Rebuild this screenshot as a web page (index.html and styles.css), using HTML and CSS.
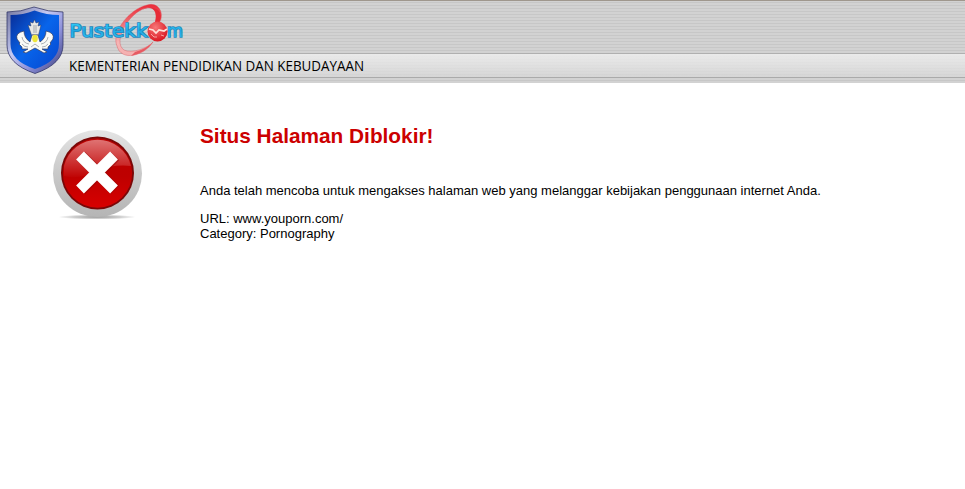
FILE: index.html
```html
<!DOCTYPE html>
<html lang="id">
<head>
<meta charset="utf-8">
<title>Situs Halaman Diblokir!</title>
<link rel="stylesheet" href="styles.css">
</head>
<body>
<header class="banner">
<svg class="brand" width="400" height="83" viewBox="0 0 400 83">
  <defs>
    <linearGradient id="rim" x1="0" y1="0" x2="1" y2="1"><stop offset="0" stop-color="#70739b"/><stop offset=".4" stop-color="#c5c9f2"/><stop offset=".65" stop-color="#8d91da"/><stop offset="1" stop-color="#343675"/></linearGradient>
    <linearGradient id="field" x1="0" y1="0" x2="1" y2="1"><stop offset="0" stop-color="#082b94"/><stop offset=".5" stop-color="#0865eb"/><stop offset="1" stop-color="#0646cf"/></linearGradient>
    <linearGradient id="ring" x1="0" y1="0" x2="0" y2="1"><stop offset="0" stop-color="#ec2a38"/><stop offset=".35" stop-color="#ee6a70"/><stop offset=".75" stop-color="#f5b5b5"/><stop offset="1" stop-color="#f4b0b0"/></linearGradient>
    <linearGradient id="word" x1="0" y1="0" x2="0" y2="1"><stop offset="0" stop-color="#38dcff"/><stop offset=".5" stop-color="#20a9e4"/><stop offset="1" stop-color="#36c4ee"/></linearGradient>
    <radialGradient id="ball" cx=".4" cy=".3" r=".7"><stop offset="0" stop-color="#f77778"/><stop offset="1" stop-color="#db1822"/></radialGradient>
  </defs>
  <path d="M7 12Q21 12 34 7Q48 12 63 12V45Q63 64 35 73.500Q7 64 7 45Z" fill="url(#rim)" stroke="#34376b" stroke-width=".8"/>
  <path d="M10.500 15Q23 15 34.500 10.500Q47 15 59 15V44Q59 61 35 69Q10.500 61 10.500 44Z" fill="url(#field)"/>
  <path d="M31.500 35L28 25L31 26L30 22L33 23L34.500 19.500L36 23L39 22L38 26L41 25L38.500 35Z" fill="#e7e8e5" stroke="#293863" stroke-width=".5"/>
  <path d="M30 42Q24 38 24 31Q15 33 17 39L20 43L19 44L22 47L22 49L28 49L23 52L26 53L35 48L44 53L47 52L42 49L48 49L48 47L51 44L50 43L53 39Q55 33 46 31Q46 38 40 42L38 35H32Z" fill="#fafaf7" stroke="#343d62" stroke-width=".7"/>
  <path d="M29 44Q23 43 22 37M28 47Q24 47 22 44M41 44Q47 43 48 37M42 47Q46 47 48 44M31 47L35 44L39 47M34 25V33M36 25V33" fill="none" stroke="#777d88" stroke-width=".6"/>
  <ellipse cx="35" cy="38.500" rx="2.800" ry="3.700" fill="#eee63a"/>
  <path d="M156 27C167 17 160 1 147 5C129 9 111 33 117 46C121 62 144 56 153 42C148 48 132 54 124 50C112 42 129 12 146 8C159 6 157 21 153 27Z" fill="url(#ring)" stroke="#d65259" stroke-width=".4"/>
  <path d="M153 27C157 21 159 6 146 8C143 9 141 10 139 12C150 3 168 9 158 25Z" fill="#e62b37"/>
  <path d="M135 52Q146 49 153 42Q146 53 131 56Z" fill="#e75a62"/>
  <text class="wordmark" x="69.500" y="36.500" textLength="78" lengthAdjust="spacingAndGlyphs">Pustekk</text>
  <text class="wordmark" x="167" y="36.500" textLength="16" lengthAdjust="spacingAndGlyphs">m</text>
  <circle cx="157.500" cy="31.500" r="10" fill="url(#ball)"/>
  <path d="M149 29L153 30L156 33L159 30L164 31L167 29" fill="none" stroke="#ffe1d9" stroke-width="1.700"/>
  <path d="M151 34L154 37L157 37M161 35L164 36" fill="none" stroke="#f6a5a2"/>
  <text class="ministry" x="69" y="71" textLength="295" lengthAdjust="spacingAndGlyphs">KEMENTERIAN PENDIDIKAN DAN KEBUDAYAAN</text>
</svg>
</header>
<main class="notice">
<svg class="blocked" width="98" height="98" viewBox="0 0 98 98">
  <defs>
    <linearGradient id="silver" x1="0" y1="0" x2="0" y2="1"><stop offset="0" stop-color="#e4e4e4"/><stop offset=".5" stop-color="#c9c9c9"/><stop offset="1" stop-color="#b5b5b5"/></linearGradient>
    <linearGradient id="red" x1="0" y1="0" x2="0" y2="1"><stop offset="0" stop-color="#b90000"/><stop offset=".55" stop-color="#be0000"/><stop offset="1" stop-color="#d80000"/></linearGradient>
    <linearGradient id="shine" x1="0" y1="0" x2="0" y2="1"><stop offset="0" stop-color="#df7373"/><stop offset="1" stop-color="#c00404"/></linearGradient>
    <radialGradient id="shadow"><stop offset="0" stop-color="#999"/><stop offset=".6" stop-color="#ccc"/><stop offset="1" stop-color="#fff"/></radialGradient>
  </defs>
  <ellipse cx="49" cy="91" rx="39" ry="2.500" fill="url(#shadow)"/>
  <ellipse cx="49.500" cy="47.500" rx="44.500" ry="43.500" fill="url(#silver)"/>
  <circle cx="49.500" cy="47" r="36.500" fill="#790707"/>
  <circle cx="49.500" cy="47" r="34.700" fill="url(#red)"/>
  <path d="M16 40A34.500 34.500 0 0 1 83 40Q65 38 49 45Q32 54 16 50Z" fill="url(#shine)"/>
  <path d="M33 30L67 64M67 30L33 64" stroke="#8e0505" stroke-width="12" opacity=".45"/>
  <path d="M32 29.500L66 63.500M66 29.500L32 63.500" stroke="#fff" stroke-width="11"/>
</svg>
<section class="message">
<h1 class="title">Situs Halaman Diblokir!</h1>
<p class="reason">Anda telah mencoba untuk mengakses halaman web yang melanggar kebijakan penggunaan internet Anda.</p>
<p class="details"><span class="url">URL: www.youporn.com/</span><br><span class="category">Category: Pornography</span></p>
</section>
</main>
</body>
</html>
```
FILE: styles.css
```css
body {
  margin: 0;
  background: #fff;
  color: #000;
  font-family: "Liberation Sans", Arial, sans-serif;
}
.banner {
  height: 83px;
  background:
    linear-gradient(#9f978d 0 1px, transparent 1px 53px, #b0b0b0 53px 54px, transparent 54px 77px, #aaa 77px 78px, transparent 78px),
    linear-gradient(transparent 54px, #eeeeeee0 54px, #d8d8d8aa 77px, transparent 77px),
    repeating-linear-gradient(#d2d2d2 0 2px, #c7c7c7 2px 3px);
}
.brand { display: block; }
.wordmark {
  font: 17.5px "DejaVu Sans", sans-serif;
  fill: url(#word);
  stroke: #1f86bd;
  stroke-width: 1.6px;
  paint-order: stroke;
}
.ministry {
  font: 14px "Open Sans", "Noto Sans", sans-serif;
  fill: #000;
}
.notice {
  display: flex;
  padding: 43px 0 0 48px;
}
.blocked { flex: none; }
.message { margin-left: 54px; }
.title {
  margin: 0;
  color: #c00;
  font-size: 20.8px;
  line-height: 20px;
}
.reason, .details {
  font-size: 13px;
  line-height: 15px;
  white-space: nowrap;
}
.reason { margin: 37px 0 13px; }
.details { margin: 0; }
```
